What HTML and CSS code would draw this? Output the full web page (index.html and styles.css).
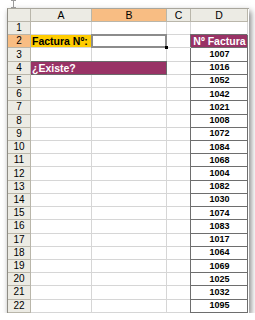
FILE: index.html
```html
<!DOCTYPE html>
<html lang="es">
<head>
<meta charset="utf-8">
<title>Factura - Existe</title>
<link rel="stylesheet" href="styles.css">
</head>
<body>
  <div class="page">
    <div class="cursor">
      <svg width="7" height="8" viewBox="0 0 7 8"><path d="M1 0.5h5M3.5 0.5v7M1 7.5h5" stroke="#9a9a9a" stroke-width="1" fill="none"/></svg>
    </div>
    <div class="sheet">
      <div class="corner"></div>
      <div class="colhead">A</div>
      <div class="colhead sel">B</div>
      <div class="colhead">C</div>
      <div class="colhead">D</div>

      <div class="rowhead">1</div><div class="cell"></div><div class="cell"></div><div class="cell"></div><div class="cell"></div>
      <div class="rowhead sel">2</div><div class="cell label">Factura Nº:</div><div class="cell active"></div><div class="cell"></div><div class="cell num title">Nº Factura</div>
      <div class="rowhead">3</div><div class="cell"></div><div class="cell"></div><div class="cell"></div><div class="cell num">1007</div>
      <div class="rowhead">4</div><div class="cell wide title">¿Existe?</div><div class="cell"></div><div class="cell num">1016</div>
      <div class="rowhead">5</div><div class="cell"></div><div class="cell"></div><div class="cell"></div><div class="cell num">1052</div>
      <div class="rowhead">6</div><div class="cell"></div><div class="cell"></div><div class="cell"></div><div class="cell num">1042</div>
      <div class="rowhead">7</div><div class="cell"></div><div class="cell"></div><div class="cell"></div><div class="cell num">1021</div>
      <div class="rowhead">8</div><div class="cell"></div><div class="cell"></div><div class="cell"></div><div class="cell num">1008</div>
      <div class="rowhead">9</div><div class="cell"></div><div class="cell"></div><div class="cell"></div><div class="cell num">1072</div>
      <div class="rowhead">10</div><div class="cell"></div><div class="cell"></div><div class="cell"></div><div class="cell num">1084</div>
      <div class="rowhead">11</div><div class="cell"></div><div class="cell"></div><div class="cell"></div><div class="cell num">1068</div>
      <div class="rowhead">12</div><div class="cell"></div><div class="cell"></div><div class="cell"></div><div class="cell num">1004</div>
      <div class="rowhead">13</div><div class="cell"></div><div class="cell"></div><div class="cell"></div><div class="cell num">1082</div>
      <div class="rowhead">14</div><div class="cell"></div><div class="cell"></div><div class="cell"></div><div class="cell num">1030</div>
      <div class="rowhead">15</div><div class="cell"></div><div class="cell"></div><div class="cell"></div><div class="cell num">1074</div>
      <div class="rowhead">16</div><div class="cell"></div><div class="cell"></div><div class="cell"></div><div class="cell num">1083</div>
      <div class="rowhead">17</div><div class="cell"></div><div class="cell"></div><div class="cell"></div><div class="cell num">1017</div>
      <div class="rowhead">18</div><div class="cell"></div><div class="cell"></div><div class="cell"></div><div class="cell num">1064</div>
      <div class="rowhead">19</div><div class="cell"></div><div class="cell"></div><div class="cell"></div><div class="cell num">1069</div>
      <div class="rowhead">20</div><div class="cell"></div><div class="cell"></div><div class="cell"></div><div class="cell num">1025</div>
      <div class="rowhead">21</div><div class="cell"></div><div class="cell"></div><div class="cell"></div><div class="cell num">1032</div>
      <div class="rowhead">22</div><div class="cell"></div><div class="cell"></div><div class="cell"></div><div class="cell num">1095</div>
    </div>
  </div>
</body>
</html>
```

FILE: styles.css
```css
body { margin: 0; background: #fff; font-family: "Liberation Sans", Arial, sans-serif; color: #000; }
.page { padding: 0 0 0 7px; width: 242px; }
.cursor { height: 8px; padding-left: 3px; line-height: 0; }
.cursor svg { display: block; }

.sheet {
  display: grid;
  grid-template-columns: 23px 61px 75px 24px 57px;
  grid-template-rows: 13px repeat(22, 13.227px);
  border-left: 1px solid #8e8c84;
  border-top: 1px solid #a8a69c;
  box-shadow: 2px 3px 6px rgba(0, 0, 0, .5);
  background: #fff;
}
.sheet > div { box-sizing: border-box; border-right: 1px solid #d6d6d6; border-bottom: 1px solid #d6d6d6; }

.corner, .colhead, .rowhead { background: #ecebe4; border-color: #b9b6aa !important; }
.colhead, .rowhead { display: flex; align-items: center; justify-content: center; font-size: 10.5px; line-height: 1; }
.rowhead { font-size: 10px; }
.colhead.sel, .rowhead.sel { background: #f8bd83; }

.cell { display: flex; align-items: center; font-size: 10.5px; line-height: 1; white-space: nowrap; }
.label { background: #ffcc00; font-weight: bold; padding-left: 1px; }
.title { background: #993366 !important; color: #fff; font-weight: bold; }
.wide { grid-column: span 2; padding-left: 1px; border-right-color: #6a6a6a !important; border-bottom-color: #6a6a6a !important; box-shadow: 0 -1px 0 #6a6a6a; }

.num { justify-content: center; font-size: 9px; font-weight: bold; padding-left: 1px;
  border-right-color: #6e6e6e !important; border-bottom-color: #6e6e6e !important; box-shadow: -1px 0 0 #6e6e6e; }
.num.title { font-size: 10.5px; box-shadow: -1px -1px 0 #6e6e6e; }

.active { position: relative; }
.active::after { content: ""; position: absolute; left: -1px; top: -1px; right: -1px; bottom: -1px; border: 2px solid #8c8c8c; }
.active::before { content: ""; position: absolute; right: -2px; bottom: -2px; width: 3px; height: 3px; background: #000; z-index: 1; }
```
